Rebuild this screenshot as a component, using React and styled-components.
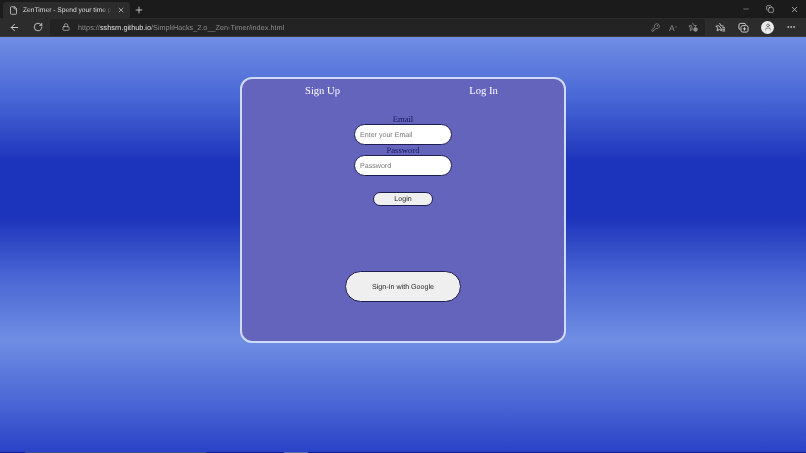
import React from "react";
import styled, { createGlobalStyle } from "styled-components";
import { ArrowLeft, RotateCw, Lock, X, Plus, Minus, File, KeyRound, Copy, Ellipsis, User } from "lucide-react";

const Global = createGlobalStyle`
  html, body { margin: 0; padding: 0; height: 100%; overflow: hidden; }
  #root { height: 100%; }
  * { box-sizing: border-box; text-rendering: geometricPrecision; }
  svg { flex: none; }
`;

const Screen = styled.div`
  width: 806px;
  height: 453px;
  display: flex;
  flex-direction: column;
  filter: blur(0.35px);
`;

const TabStrip = styled.div`
  height: 18px;
  background: #1b1b1b;
  display: flex;
  align-items: flex-end;
  padding-left: 3px;
  color: #d8d8d8;
`;

const Tab = styled.div`
  width: 127px;
  height: 16px;
  background: #2c2c2c;
  border-radius: 3px 3px 0 0;
  display: flex;
  align-items: center;
  padding: 0 5px 0 6px;
  gap: 5px;
`;

const TabTitle = styled.span`
  flex: 1;
  min-width: 0;
  font: 6.7px "Liberation Sans", sans-serif;
  color: #dedede;
  white-space: nowrap;
  -webkit-mask-image: linear-gradient(to right, #000 88%, transparent);
  mask-image: linear-gradient(to right, #000 88%, transparent);
`;

const NewTab = styled.div`
  width: 18px;
  height: 16px;
  display: flex;
  align-items: center;
  justify-content: center;
`;

const WindowButtons = styled.div`
  margin-left: auto;
  display: flex;
  align-self: center;
  gap: 16px;
  padding-right: 7px;
  color: #cfcfcf;
`;

const MinimizeSlot = styled.span`
  display: flex;
  color: #9a9a9a;
`;

const Toolbar = styled.div`
  height: 19px;
  background: #2c2c2c;
  display: flex;
  align-items: center;
  color: #d5d5d5;
  border-bottom: 1px solid #3a3a3a;
`;

const NavButton = styled.div`
  width: 24px;
  display: flex;
  justify-content: center;
  flex: none;
`;

const NavGroup = styled.div`
  width: 50px;
  flex: none;
  display: flex;
  padding-left: 2px;
`;

const Address = styled.div`
  width: 655px;
  height: 17px;
  background: #232323;
  border-radius: 3px;
  display: flex;
  align-items: center;
  padding: 0 7px 0 12px;
  flex: none;
  color: #c9c9c9;
`;

const Url = styled.span`
  margin-left: 8px;
  font: 7.3px "Liberation Sans", sans-serif;
  color: #8b8b8b;
  white-space: nowrap;
`;

const Host = styled.span`
  color: #e0e0e0;
`;

const AddressIcons = styled.div`
  margin-left: auto;
  display: flex;
  align-items: center;
  gap: 9px;
  color: #8f8f8f;
`;

const ReadAloud = styled.span`
  width: 10px;
  font: 8.5px/10px "Liberation Sans", sans-serif;
  color: #8f8f8f;
  white-space: nowrap;
`;

const ReadAloudMark = styled.span`
  font-size: 4px;
  vertical-align: 3px;
`;

const Avatar = styled.div`
  width: 13px;
  height: 13px;
  border-radius: 50%;
  background: #eaeaea;
  color: #555;
  display: flex;
  align-items: center;
  justify-content: center;
`;

const ToolGroup = styled.div`
  display: flex;
  flex: 1;
  align-items: center;
  justify-content: space-between;
  padding: 0 10px;
`;

const Page = styled.main`
  flex: 1;
  padding-top: 40px;
  display: flex;
  justify-content: center;
  align-items: flex-start;
  background: linear-gradient(
    to bottom,
    #6f8ee3 0,
    #4a68d6 60px,
    #1c33bb 125px,
    #1c33bb 180px,
    #4a66d4 240px,
    #6f8ee3 303px,
    #4d6ad6 360px,
    #2a42c6 415px
  );
`;

const Card = styled.section`
  width: 326px;
  height: 266px;
  background: #6464bc;
  border: 2px solid #cfdaf4;
  border-radius: 12px;
  display: flex;
  flex-direction: column;
  align-items: center;
`;

const Tabs = styled.div`
  align-self: stretch;
  display: flex;
  padding-top: 6px;
`;

const FormTab = styled.div`
  flex: 1;
  text-align: center;
  font: 10.6px/13px "Liberation Serif", serif;
  color: #fff;
`;

const Form = styled.form`
  display: flex;
  flex-direction: column;
  align-items: center;
  margin-top: 16px;
`;

const Label = styled.label`
  font: 8.6px/10px "Liberation Serif", serif;
  color: #14145a;
  height: 10px;
`;

const Field = styled.input`
  width: 98px;
  height: 21px;
  border: 1.5px solid #1e1e50;
  border-radius: 11px;
  background: #fff;
  padding: 0 5px;
  font: 7.1px "Liberation Sans", sans-serif;
  outline: none;
  &::placeholder { color: #777; opacity: 1; }
`;

const LoginButton = styled.button`
  width: 60px;
  height: 14px;
  margin-top: 16px;
  padding: 0;
  border: 1.5px solid #1e1e50;
  border-radius: 7px;
  background: #efefef;
  color: #222;
  font: 7.1px "Liberation Sans", sans-serif;
`;

const GoogleButton = styled.button`
  width: 116px;
  height: 31px;
  margin-top: 65px;
  padding: 0;
  border: 1.5px solid #1e1e50;
  border-radius: 16px;
  background: #efefef;
  color: #222;
  font: 7.1px "Liberation Sans", sans-serif;
`;

const Taskbar = styled.div`
  height: 1px;
  display: flex;
  margin-top: -1px;
  position: relative;
  background: #14208f;
`;

const TaskbarItem = styled.div`
  width: ${(p) => p.$w}px;
  background: ${(p) => p.$c};
`;

const StarPlus = () => (
  <svg width="10" height="10" viewBox="0 0 12 12" fill="none" stroke="currentColor" strokeWidth="1">
    <path d="M5.5 1 L6.9 4 L10 4.4 L7.8 6.5 M5.2 9 L2.6 10.4 L3.2 7.2 L1 4.8 L4.1 4.2 Z" />
    <circle cx="9" cy="9" r="2.2" fill="currentColor" />
  </svg>
);

const Favorites = () => (
  <svg width="11" height="11" viewBox="0 0 12 12" fill="none" stroke="currentColor" strokeWidth="1">
    <path d="M5 1.2 L6.4 4 L9.4 4.4 M6.6 6.8 L7 9.6 L5 8.2 L2.4 9.6 L3 6.6 L1 4.6 L3.8 4 Z" />
    <path d="M8 6.2 H11 M8 8 H11 M8 9.8 H11" />
  </svg>
);

const Collections = () => (
  <svg width="11" height="11" viewBox="0 0 12 12" fill="none" stroke="currentColor" strokeWidth="1">
    <path d="M2.5 8.5 A2 2 0 0 1 1 6.5 V3.5 A2 2 0 0 1 3 1.5 H6.5 A2 2 0 0 1 8.5 3" />
    <rect x="3.2" y="4" width="7.8" height="7" rx="2" />
    <path d="M7.1 5.8 V9.2 M5.4 7.5 H8.8" />
  </svg>
);

export default function App() {
  return (
    <Screen>
      <Global />
      <TabStrip>
        <Tab>
          <File size={9} />
          <TabTitle>ZenTimer - Spend your time pro</TabTitle>
          <X size={8} />
        </Tab>
        <NewTab><Plus size={10} /></NewTab>
        <WindowButtons>
          <MinimizeSlot><Minus size={8} /></MinimizeSlot>
          <Copy size={8} />
          <X size={9} />
        </WindowButtons>
      </TabStrip>
      <Toolbar>
        <NavGroup>
          <NavButton><ArrowLeft size={11} /></NavButton>
          <NavButton><RotateCw size={10} /></NavButton>
        </NavGroup>
        <Address>
          <Lock size={8} />
          <Url>https://<Host>sshsrn.github.io</Host>/SimpliHacks_2.o__Zen-Timer/index.html</Url>
          <AddressIcons>
            <KeyRound size={9} />
            <ReadAloud>A<ReadAloudMark>»</ReadAloudMark></ReadAloud>
            <StarPlus />
          </AddressIcons>
        </Address>
        <ToolGroup>
          <Favorites />
          <Collections />
          <Avatar><User size={8} /></Avatar>
          <Ellipsis size={10} />
        </ToolGroup>
      </Toolbar>
      <Page>
        <Card>
          <Tabs>
            <FormTab>Sign Up</FormTab>
            <FormTab>Log In</FormTab>
          </Tabs>
          <Form onSubmit={(e) => e.preventDefault()}>
            <Label htmlFor="email">Email</Label>
            <Field id="email" placeholder="Enter your Email" />
            <Label htmlFor="password">Password</Label>
            <Field id="password" placeholder="Password" />
            <LoginButton>Login</LoginButton>
            <GoogleButton type="button">Sign-In with Google</GoogleButton>
          </Form>
        </Card>
      </Page>
      <Taskbar>
        <TaskbarItem $w={25} $c="#14208f" />
        <TaskbarItem $w={181} $c="#3f4a9a" />
        <TaskbarItem $w={78} $c="#14208f" />
        <TaskbarItem $w={24} $c="#5a66b8" />
      </Taskbar>
    </Screen>
  );
}
